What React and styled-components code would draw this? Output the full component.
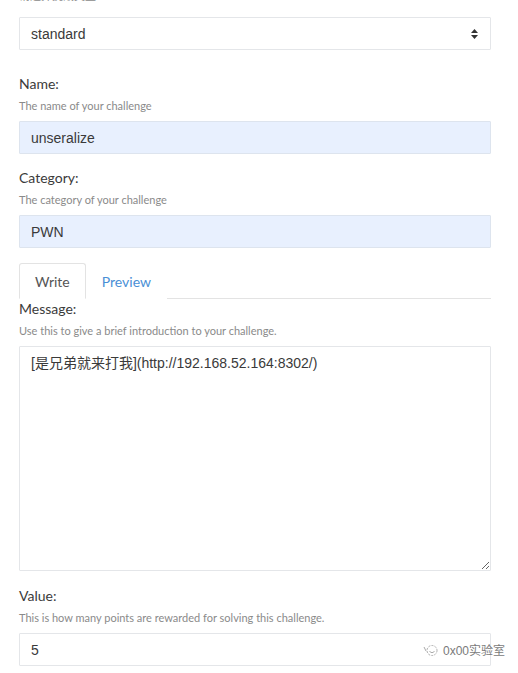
import styled, { createGlobalStyle } from "styled-components";

const GlobalStyle = createGlobalStyle`
    html, body {
        margin: 0;
        padding: 0;
        background: #ffffff;
        overflow: hidden;
    }
    body {
        font-family: Lato, "Noto Sans CJK SC", sans-serif;
    }
`;

const Page = styled.div`
    position: relative;
    width: 518px;
    height: 673px;
    overflow: hidden;
`;

const Form = styled.div`
    width: 472px;
    padding-left: 19px;
`;

const Group = styled.div`
    margin-bottom: ${(p) => p.$space}px;
`;

const Label = styled.div`
    font-size: 14px;
    line-height: 20px;
    color: #3b3b3b;
    margin-bottom: 4px;
`;

const Help = styled.div`
    font-size: 11px;
    line-height: 16px;
    color: #8a8a8a;
    margin-bottom: 7px;
    font-family: Lato, "Noto Sans CJK SC", sans-serif;
`;

const CutHelp = styled(Help)`
    margin-top: -12px;
    margin-bottom: 13px;
`;

const Field = styled.div`
    box-sizing: border-box;
    height: 33px;
    display: flex;
    align-items: center;
    justify-content: space-between;
    padding: 0 12px 0 11px;
    font-family: "Liberation Sans", Arial, sans-serif;
    font-size: 14px;
    color: #3a3a3a;
    background: ${(p) => (p.$filled ? "#e8f0fe" : "#ffffff")};
    border: 1px solid ${(p) => (p.$filled ? "#dde4ee" : "#e4e6e9")};
    border-radius: 1px;
`;

const Arrows = styled.svg`
    width: 7px;
    height: 10px;
`;

const Tabs = styled.div`
    display: flex;
    height: 36px;
    box-sizing: border-box;
    border-bottom: 1px solid #e3e3e3;
`;

const Tab = styled.div`
    box-sizing: border-box;
    height: 36px;
    padding: 0 15px;
    display: flex;
    align-items: center;
    font-size: 14px;
    color: ${(p) => (p.$active ? "#555" : "#4a8fd6")};
    background: #fff;
    border: 1px solid ${(p) => (p.$active ? "#e3e3e3" : "transparent")};
    border-bottom-color: ${(p) => (p.$active ? "#fff" : "transparent")};
    border-radius: 3px 3px 0 0;
    margin-bottom: -1px;
`;

const TextArea = styled.textarea`
    display: block;
    box-sizing: border-box;
    width: 100%;
    height: 225px;
    margin: 0;
    padding: 6px 11px;
    font-family: "Liberation Sans", Arial, "Noto Sans CJK SC", sans-serif;
    font-size: 14px;
    line-height: 20px;
    color: #3a3a3a;
    border: 1px solid #e4e6e9;
    border-radius: 1px;
    outline: none;
    background: #fff;
`;

const Watermark = styled.div`
    position: absolute;
    right: 13px;
    bottom: 15px;
    display: flex;
    align-items: center;
    gap: 5px;
    font-family: "Liberation Sans", "Noto Sans CJK SC", sans-serif;
    font-size: 12px;
    color: #7a7a7a;
`;

const WeIcon = styled.svg`
    width: 16px;
    height: 14px;
`;

export default function App() {
    return (
        <Page>
            <GlobalStyle />
            <Form>
                <Group $space={24}>
                    <CutHelp>请选择挑战类型</CutHelp>
                    <Field>
                        <span>standard</span>
                        <Arrows viewBox="0 0 7 10">
                            <path d="M3.5 0 L7 4 H0 Z M0 6 H7 L3.5 10 Z" fill="#333" />
                        </Arrows>
                    </Field>
                </Group>
                <Group $space={14}>
                    <Label>Name:</Label>
                    <Help>The name of your challenge</Help>
                    <Field $filled>unseralize</Field>
                </Group>
                <Group $space={15}>
                    <Label>Category:</Label>
                    <Help>The category of your challenge</Help>
                    <Field $filled>PWN</Field>
                </Group>
                <Tabs>
                    <Tab $active>Write</Tab>
                    <Tab>Preview</Tab>
                </Tabs>
                <Group $space={15}>
                    <Label>Message:</Label>
                    <Help>Use this to give a brief introduction to your challenge.</Help>
                    <TextArea
                        readOnly
                        defaultValue="[是兄弟就来打我](http://192.168.52.164:8302/)"
                    />
                </Group>
                <Group $space={0}>
                    <Label>Value:</Label>
                    <Help>This is how many points are rewarded for solving this challenge.</Help>
                    <Field>5</Field>
                </Group>
            </Form>
            <Watermark>
                <WeIcon viewBox="0 0 16 14">
                    <path d="M2 4 L4 8" stroke="#aaa" strokeWidth="1" fill="none" />
                    <circle cx="10" cy="7.5" r="5" stroke="#aaa" strokeWidth="1" fill="none" strokeDasharray="2 1.2" />
                    <path d="M7.5 8.5 Q10 11 12.5 8.5" stroke="#aaa" strokeWidth="1" fill="none" />
                </WeIcon>
                <span>0x00实验室</span>
            </Watermark>
        </Page>
    );
}
